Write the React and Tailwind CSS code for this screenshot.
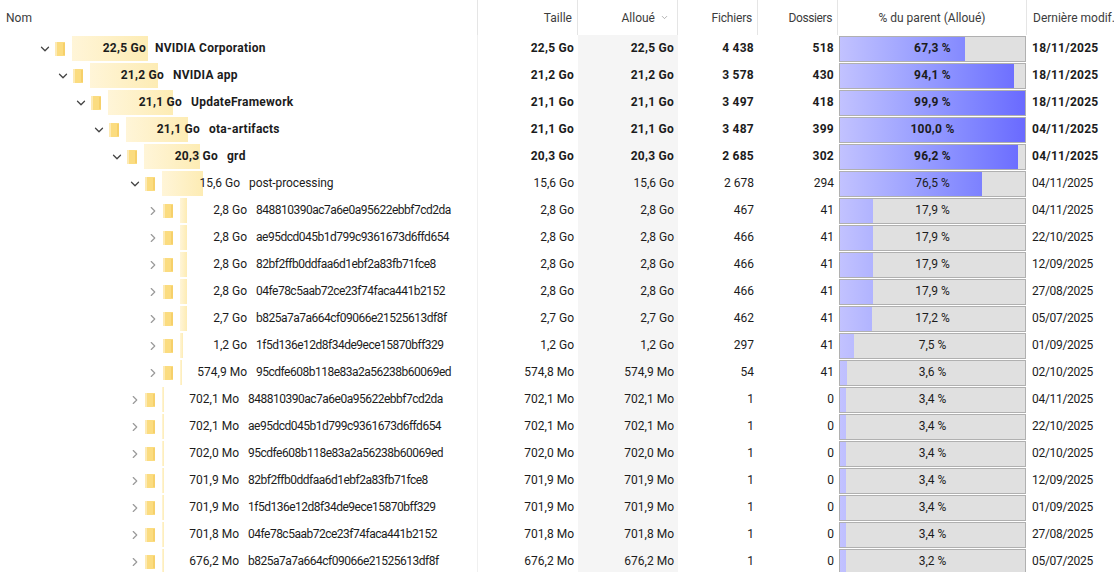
import React from 'react';
import { ChevronDown, ChevronRight } from 'lucide-react';

// depth, open, nameX (left edge of name), barW, bold row flag come from the table below
const rows = [
  { d: 0, open: true, x: 155, bar: 76, size: '22,5 Go', name: 'NVIDIA Corporation', taille: '22,5 Go', alloue: '22,5 Go', files: '4 438', dirs: '518', pct: 67.3, date: '18/11/2025', bold: true },
  { d: 1, open: true, x: 173, bar: 68, size: '21,2 Go', name: 'NVIDIA app', taille: '21,2 Go', alloue: '21,2 Go', files: '3 578', dirs: '430', pct: 94.1, date: '18/11/2025', bold: true },
  { d: 2, open: true, x: 191, bar: 65, size: '21,1 Go', name: 'UpdateFramework', taille: '21,1 Go', alloue: '21,1 Go', files: '3 497', dirs: '418', pct: 99.9, date: '18/11/2025', bold: true },
  { d: 3, open: true, x: 209, bar: 62, size: '21,1 Go', name: 'ota-artifacts', taille: '21,1 Go', alloue: '21,1 Go', files: '3 487', dirs: '399', pct: 100, date: '04/11/2025', bold: true },
  { d: 4, open: true, x: 227, bar: 56, size: '20,3 Go', name: 'grd', taille: '20,3 Go', alloue: '20,3 Go', files: '2 685', dirs: '302', pct: 96.2, date: '04/11/2025', bold: true },
  { d: 5, open: true, x: 249, bar: 41, size: '15,6 Go', name: 'post-processing', taille: '15,6 Go', alloue: '15,6 Go', files: '2 678', dirs: '294', pct: 76.5, date: '04/11/2025' },
  { d: 6, x: 256, bar: 7, size: '2,8 Go', name: '848810390ac7a6e0a95622ebbf7cd2da', taille: '2,8 Go', alloue: '2,8 Go', files: '467', dirs: '41', pct: 17.9, date: '04/11/2025' },
  { d: 6, x: 256, bar: 7, size: '2,8 Go', name: 'ae95dcd045b1d799c9361673d6ffd654', taille: '2,8 Go', alloue: '2,8 Go', files: '466', dirs: '41', pct: 17.9, date: '22/10/2025' },
  { d: 6, x: 256, bar: 7, size: '2,8 Go', name: '82bf2ffb0ddfaa6d1ebf2a83fb71fce8', taille: '2,8 Go', alloue: '2,8 Go', files: '466', dirs: '41', pct: 17.9, date: '12/09/2025' },
  { d: 6, x: 256, bar: 7, size: '2,8 Go', name: '04fe78c5aab72ce23f74faca441b2152', taille: '2,8 Go', alloue: '2,8 Go', files: '466', dirs: '41', pct: 17.9, date: '27/08/2025' },
  { d: 6, x: 256, bar: 7, size: '2,7 Go', name: 'b825a7a7a664cf09066e21525613df8f', taille: '2,7 Go', alloue: '2,7 Go', files: '462', dirs: '41', pct: 17.2, date: '05/07/2025' },
  { d: 6, x: 256, bar: 3, size: '1,2 Go', name: '1f5d136e12d8f34de9ece15870bff329', taille: '1,2 Go', alloue: '1,2 Go', files: '297', dirs: '41', pct: 7.5, date: '01/09/2025' },
  { d: 6, x: 256, bar: 2, size: '574,9 Mo', name: '95cdfe608b118e83a2a56238b60069ed', taille: '574,8 Mo', alloue: '574,9 Mo', files: '54', dirs: '41', pct: 3.6, date: '02/10/2025' },
  { d: 5, x: 248, bar: 2, size: '702,1 Mo', name: '848810390ac7a6e0a95622ebbf7cd2da', taille: '702,1 Mo', alloue: '702,1 Mo', files: '1', dirs: '0', pct: 3.4, date: '04/11/2025' },
  { d: 5, x: 248, bar: 2, size: '702,1 Mo', name: 'ae95dcd045b1d799c9361673d6ffd654', taille: '702,1 Mo', alloue: '702,1 Mo', files: '1', dirs: '0', pct: 3.4, date: '22/10/2025' },
  { d: 5, x: 248, bar: 2, size: '702,0 Mo', name: '95cdfe608b118e83a2a56238b60069ed', taille: '702,0 Mo', alloue: '702,0 Mo', files: '1', dirs: '0', pct: 3.4, date: '02/10/2025' },
  { d: 5, x: 248, bar: 2, size: '701,9 Mo', name: '82bf2ffb0ddfaa6d1ebf2a83fb71fce8', taille: '701,9 Mo', alloue: '701,9 Mo', files: '1', dirs: '0', pct: 3.4, date: '12/09/2025' },
  { d: 5, x: 248, bar: 2, size: '701,9 Mo', name: '1f5d136e12d8f34de9ece15870bff329', taille: '701,9 Mo', alloue: '701,9 Mo', files: '1', dirs: '0', pct: 3.4, date: '01/09/2025' },
  { d: 5, x: 248, bar: 2, size: '701,8 Mo', name: '04fe78c5aab72ce23f74faca441b2152', taille: '701,8 Mo', alloue: '701,8 Mo', files: '1', dirs: '0', pct: 3.4, date: '27/08/2025' },
  { d: 5, x: 248, bar: 2, size: '676,2 Mo', name: 'b825a7a7a664cf09066e21525613df8f', taille: '676,2 Mo', alloue: '676,2 Mo', files: '1', dirs: '0', pct: 3.2, date: '05/07/2025' },
];

function FolderIcon() {
  return (
    <svg width="10" height="14" viewBox="0 0 10 14" className="shrink-0">
      <rect x="0" y="0" width="10" height="14" fill="#fbdc80" />
      <rect x="0" y="0" width="2" height="14" fill="#fdeab4" />
      <rect x="8" y="1" width="2" height="12" fill="#f6d06a" />
    </svg>
  );
}

function ParentBar({ pct }) {
  return (
    <div className="relative h-[26px] w-[187px] border border-[#b0b0b0] bg-[#e0e0e0]">
      <div
        className="h-full bg-gradient-to-r from-[#c2c2ff] to-[#6a6aff]"
        style={{ width: `${pct}%`, backgroundSize: `${(100 / pct) * 100}% 100%`, backgroundRepeat: 'no-repeat' }}
      />
      <span className="absolute inset-0 flex items-center justify-center pb-px">{pct.toFixed(1).replace('.', ',')} %</span>
    </div>
  );
}

function Row({ row }) {
  const Chevron = row.open ? ChevronDown : ChevronRight;
  const barLeft = 72 + row.d * 18;
  // hash names run wider in Roboto than in the reference, bold ones narrower
  const nameTracking = row.bold ? '' : row.open ? 'tracking-[-0.1px]' : 'tracking-[-0.5px]';
  return (
    <div className={`flex h-[27px] items-center ${row.bold ? 'font-bold tracking-[0.25px]' : ''}`}>
      <div className="flex h-full w-[478px] shrink-0 items-center border-r border-[#f0f0f0]" style={{ paddingLeft: 38 + row.d * 18 }}>
        <Chevron size={14} strokeWidth={row.open ? 2.2 : 2} className={`shrink-0 ${row.open ? 'text-[#444444]' : 'text-[#9a9a9a]'}`} />
        <div className="ml-[3px] mr-[7px]">
          <FolderIcon />
        </div>
        <div className="relative flex h-full shrink-0 items-center justify-end whitespace-nowrap" style={{ width: row.x - 9 - barLeft }}>
          <div
            className="absolute left-0 top-px h-[25px] bg-gradient-to-r from-[#fff5d8] to-[#fdecb4]"
            style={{ width: row.bar }}
          />
          <span className="relative pb-px">{row.size}</span>
        </div>
        <span className={`ml-[9px] whitespace-nowrap pb-px ${nameTracking}`}>{row.name}</span>
      </div>
      <div className="w-[100px] shrink-0 pb-px pr-[4px] text-right">{row.taille}</div>
      <div className="flex h-full w-[100px] shrink-0 items-center justify-end bg-[#f5f5f5] pb-px pr-[4px]">{row.alloue}</div>
      <div className="w-[80px] shrink-0 pb-px pr-[4px] text-right">{row.files}</div>
      <div className="w-[80px] shrink-0 pb-px pr-[4px] text-right">{row.dirs}</div>
      <div className="w-[189px] shrink-0 pl-px">
        <ParentBar pct={row.pct} />
      </div>
      <div className={`whitespace-nowrap pb-px pl-[5px] ${row.bold ? '' : 'tracking-[-0.3px]'}`}>{row.date}</div>
    </div>
  );
}

export default function App() {
  return (
    <div className="h-[572px] w-[1114px] overflow-hidden bg-white text-[12px] text-[#1c1c1c] [font-family:Roboto,'Liberation_Sans',sans-serif]">
      {/* column headers */}
      <div className="flex h-[35px] items-center text-[#3c3c3c]">
        <div className="flex h-full w-[478px] shrink-0 items-center border-r border-[#e5e5e5] pl-[6px]">Nom</div>
        <div className="flex h-full w-[100px] shrink-0 items-center justify-end border-r border-[#e5e5e5] pr-[5px]">Taille</div>
        <div className="flex h-full w-[100px] shrink-0 items-center justify-end border-r border-[#e5e5e5] pr-[8px]">
          <span>Alloué</span>
          <ChevronDown size={9} className="ml-[5px] text-[#9a9a9a]" />
        </div>
        <div className="flex h-full w-[80px] shrink-0 items-center justify-end border-r border-[#e5e5e5] pr-[5px] tracking-[-0.2px]">Fichiers</div>
        <div className="flex h-full w-[80px] shrink-0 items-center justify-end border-r border-[#e5e5e5] pr-[5px] tracking-[-0.4px]">Dossiers</div>
        <div className="flex h-full w-[189px] shrink-0 items-center justify-center border-r border-[#e5e5e5]">% du parent (Alloué)</div>
        <div className="whitespace-nowrap pl-[6px]">Dernière modif.</div>
      </div>
      {rows.map((row, i) => (
        <Row key={i} row={row} />
      ))}
    </div>
  );
}
